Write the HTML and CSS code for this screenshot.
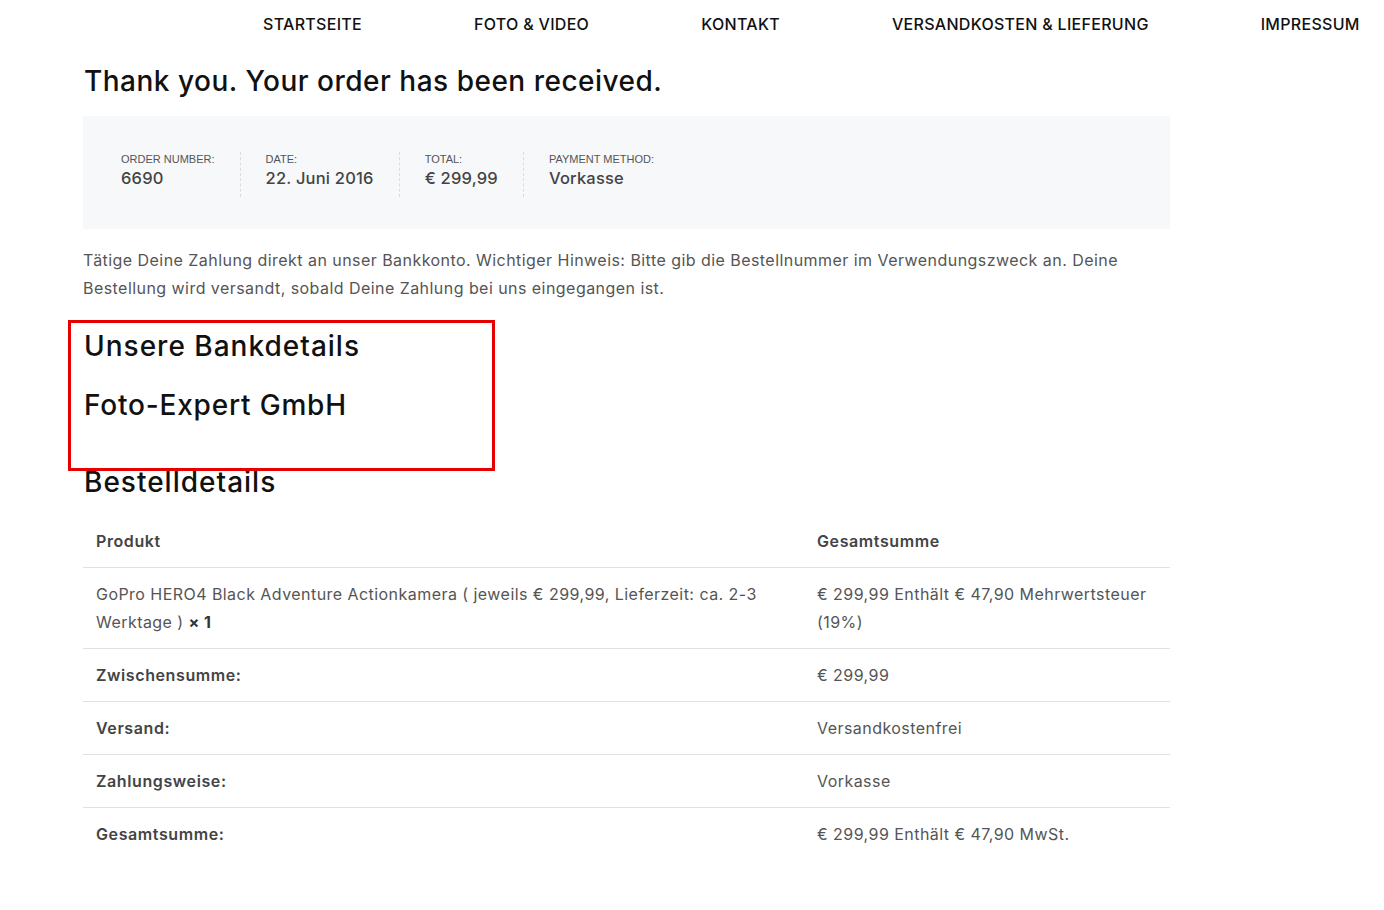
FILE: index.html
```html
<!DOCTYPE html>
<html lang="de">
<head>
<meta charset="utf-8">
<title>Bestellung erhalten</title>
<link rel="stylesheet" href="styles.css">
</head>
<body>
<nav class="topnav">
  <a href="#">STARTSEITE</a>
  <a href="#">FOTO &amp; VIDEO</a>
  <a href="#">KONTAKT</a>
  <a href="#">VERSANDKOSTEN &amp; LIEFERUNG</a>
  <a href="#">IMPRESSUM</a>
</nav>
<main class="content">
  <h1 class="thanks">Thank you. Your order has been received.</h1>
  <ul class="overview">
    <li><span class="label">ORDER NUMBER:</span><strong>6690</strong></li>
    <li><span class="label">DATE:</span><strong>22. Juni 2016</strong></li>
    <li><span class="label">TOTAL:</span><strong>€ 299,99</strong></li>
    <li><span class="label">PAYMENT METHOD:</span><strong>Vorkasse</strong></li>
  </ul>
  <p class="note">Tätige Deine Zahlung direkt an unser Bankkonto. Wichtiger Hinweis: Bitte gib die Bestellnummer im Verwendungszweck an. Deine Bestellung wird versandt, sobald Deine Zahlung bei uns eingegangen ist.</p>
  <section class="bank">
    <h2 class="sec-title">Unsere Bankdetails</h2>
    <h3 class="sec-sub">Foto-Expert GmbH</h3>
    <div class="highlight"></div>
  </section>
  <h2 class="sec-title details">Bestelldetails</h2>
  <table class="order">
    <thead>
      <tr><th class="c1">Produkt</th><th class="c2">Gesamtsumme</th></tr>
    </thead>
    <tbody>
      <tr><td class="c1">GoPro HERO4 Black Adventure Actionkamera <span class="muted">( jeweils € 299,99, Lieferzeit: ca. 2-3 Werktage )</span> <strong>× 1</strong></td><td class="c2">€ 299,99 Enthält € 47,90 Mehrwertsteuer (19%)</td></tr>
    </tbody>
    <tfoot>
      <tr><th class="c1">Zwischensumme:</th><td class="c2">€ 299,99</td></tr>
      <tr><th class="c1">Versand:</th><td class="c2">Versandkostenfrei</td></tr>
      <tr><th class="c1">Zahlungsweise:</th><td class="c2">Vorkasse</td></tr>
      <tr class="last"><th class="c1">Gesamtsumme:</th><td class="c2">€ 299,99 Enthält € 47,90 MwSt.</td></tr>
    </tfoot>
  </table>
</main>
</body>
</html>
```
FILE: styles.css
```css
* { box-sizing: border-box; }
html, body { margin: 0; padding: 0; background: #fff; }
body {
  font-family: Inter, "Liberation Sans", Arial, sans-serif;
  color: #555;
  font-size: 16px;
  letter-spacing: 0.45px;
}
.topnav {
  display: flex;
  gap: 112px;
  padding: 14px 0 0 263px;
  height: 48px;
  white-space: nowrap;
}
.topnav a {
  color: #111;
  text-decoration: none;
  font-size: 16px;
  font-weight: 500;
  line-height: 20px;
  letter-spacing: 0.3px;
}
.content {
  position: relative;
  width: 1087px;
  margin-left: 83px;
}
.thanks {
  margin: 15px 0 17px 1px;
  font-size: 28px;
  line-height: 36px;
  font-weight: 500;
  color: #111;
  letter-spacing: 0.5px;
}
.overview {
  list-style: none;
  margin: 0;
  padding: 36px 38px 32px;
  background: #f7f8fa;
  display: flex;
  height: 113px;
}
.overview li {
  display: flex;
  flex-direction: column;
  padding-right: 25px;
  margin-right: 25px;
  border-right: 1px dashed #dcdcdc;
}
.overview li:last-child { border-right: 0; }
.overview .label {
  font-family: "Liberation Sans", Arial, sans-serif;
  font-size: 11px;
  line-height: 14px;
  color: #555;
  text-transform: uppercase;
  letter-spacing: 0;
}
.overview strong {
  font-size: 16.5px;
  line-height: 24px;
  font-weight: 500;
  color: #444;
  letter-spacing: 0.2px;
}
.note {
  margin: 17px 0 0;
  line-height: 28px;
  font-size: 16px;
  color: #555;
}
.bank {
  position: relative;
  margin-top: 24px;
}
.sec-title, .sec-sub {
  margin: 0;
  font-size: 28px;
  line-height: 40px;
  font-weight: 500;
  color: #111;
  letter-spacing: 1px;
  padding-left: 1px;
}
.sec-sub { margin-top: 19px; letter-spacing: 0.8px; }
.highlight {
  position: absolute;
  left: -15px;
  top: -6px;
  width: 427px;
  height: 151px;
  border: 3px solid #e60000;
  pointer-events: none;
}
.details { margin-top: 37px; }
.order {
  width: 100%;
  border-collapse: collapse;
  margin-top: 13px;
  font-size: 16px;
}
.order th, .order td {
  text-align: left;
  vertical-align: top;
  padding: 12px 13px 12px;
  line-height: 28px;
  border-bottom: 1px solid #e0e0e0;
}
.order tr.last th, .order tr.last td { border-bottom: 0; }
.order th {
  font-weight: 600;
  color: #444;
  font-size: 16px;
  letter-spacing: 0.6px;
}
.order .c1 { width: 721px; }
.order td { color: #555; }
.order strong { color: #333; font-weight: 700; }
.muted { color: #555; }
```
